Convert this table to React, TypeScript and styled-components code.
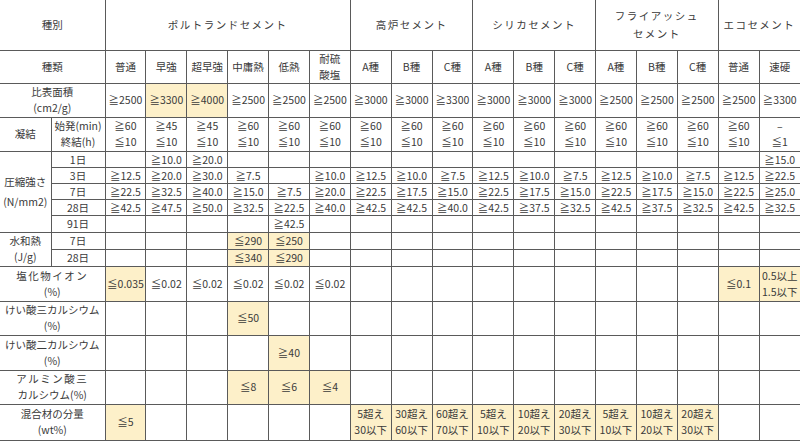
import React, { FC } from "react";
import styled, { createGlobalStyle } from "styled-components";

const GlobalStyle = createGlobalStyle`
  html, body {
    margin: 0;
    padding: 0;
    background: #fff;
  }
  body {
    font-family: "Noto Sans CJK JP", "Noto Sans", sans-serif;
    color: #3a3a3a;
  }
`;

const Table = styled.table`
  width: 800px;
  border-collapse: collapse;
  table-layout: fixed;
  font-size: 10.5px;
  line-height: 16px;
`;

const Row = styled.tr<{ $h: number; $tight?: boolean }>`
  height: ${(p) => p.$h}px;
  td {
    line-height: ${(p) => (p.$tight ? "13px" : "16px")};
  }
`;

interface CellProps {
  $hl?: boolean;
  $sub?: boolean;
}

const Cell = styled.td<CellProps>`
  border: 1px solid #5a5a5a;
  border-top-color: ${(p) => (p.$sub ? "#c4c4c4" : "#5a5a5a")};
  background: ${(p) => (p.$hl ? "#fdf0c9" : "#fff")};
  text-align: center;
  vertical-align: middle;
  padding: 0;
  white-space: nowrap;
  overflow: hidden;
  &:first-child {
    border-left: none;
  }
  &:last-child {
    border-right: none;
  }
`;

// group label spanning several thin rows
const GroupCell = styled(Cell)<{ $lh: number }>`
  && {
    line-height: ${(p) => p.$lh}px;
  }
`;

const HeadRow = styled.tr`
  height: 50px;
  td {
    border-top: none;
    line-height: 18px;
  }
`;

const Spaced = styled.span`
  letter-spacing: 1.5px;
`;

type V = string | [string, boolean];

const ml = (s: string) =>
  s.split("\n").map((l, i) => (
    <React.Fragment key={i}>
      {i > 0 && <br />}
      {l}
    </React.Fragment>
  ));

const Values: FC<{ vals: V[]; sub?: boolean }> = ({ vals, sub }) => (
  <>
    {vals.map((v, i) => {
      const [t, hl] = typeof v === "string" ? [v, false] : v;
      return (
        <Cell key={i} $hl={hl} $sub={sub}>
          {ml(t)}
        </Cell>
      );
    })}
  </>
);

const blank = (n: number): V[] => Array(n).fill("");
const h = (s: string): V => [s, true];

const setting: V[] = [
  "≧60\n≦10", "≧45\n≦10", "≧45\n≦10",
  ...Array(13).fill("≧60\n≦10"),
  "–\n≦1",
];

const strength: { label: string; vals: V[] }[] = [
  { label: "1日", vals: ["", "≧10.0", "≧20.0", ...blank(13), "≧15.0"] },
  {
    label: "3日",
    vals: ["≧12.5", "≧20.0", "≧30.0", "≧7.5", "", "≧10.0", "≧12.5", "≧10.0", "≧7.5", "≧12.5", "≧10.0", "≧7.5", "≧12.5", "≧10.0", "≧7.5", "≧12.5", "≧22.5"],
  },
  {
    label: "7日",
    vals: ["≧22.5", "≧32.5", "≧40.0", "≧15.0", "≧7.5", "≧20.0", "≧22.5", "≧17.5", "≧15.0", "≧22.5", "≧17.5", "≧15.0", "≧22.5", "≧17.5", "≧15.0", "≧22.5", "≧25.0"],
  },
  {
    label: "28日",
    vals: ["≧42.5", "≧47.5", "≧50.0", "≧32.5", "≧22.5", "≧40.0", "≧42.5", "≧42.5", "≧40.0", "≧42.5", "≧37.5", "≧32.5", "≧42.5", "≧37.5", "≧32.5", "≧42.5", "≧32.5"],
  },
  { label: "91日", vals: [...blank(4), "≧42.5", ...blank(12)] },
];

const Labels = ["普通", "早強", "超早強", "中庸熱", "低熱", "耐硫\n酸塩", "A種", "B種", "C種", "A種", "B種", "C種", "A種", "B種", "C種", "普通", "速硬"];

export default function App() {
  return (
    <>
      <GlobalStyle />
      <Table>
        <colgroup>
          <col style={{ width: 51 }} />
          <col style={{ width: 54 }} />
          {Array.from({ length: 17 }).map((_, i) => (
            <col key={i} />
          ))}
        </colgroup>
        <tbody>
          <HeadRow>
            <Cell colSpan={2}>種別</Cell>
            <Cell colSpan={6}><Spaced>ポルトランドセメント</Spaced></Cell>
            <Cell colSpan={3}><Spaced>高炉セメント</Spaced></Cell>
            <Cell colSpan={3}><Spaced>シリカセメント</Spaced></Cell>
            <Cell colSpan={3}><Spaced>フライアッシュ<br />セメント</Spaced></Cell>
            <Cell colSpan={2}><Spaced>エコセメント</Spaced></Cell>
          </HeadRow>
          <Row $h={33}>
            <Cell colSpan={2}>種類</Cell>
            <Values vals={Labels} />
          </Row>
          <Row $h={34}>
            <Cell colSpan={2}>比表面積<br />(cm2/g)</Cell>
            <Values
              vals={["≧2500", h("≧3300"), h("≧4000"), "≧2500", "≧2500", "≧2500", "≧3000", "≧3000", "≧3300", "≧3000", "≧3000", "≧3000", "≧2500", "≧2500", "≧2500", "≧2500", "≧3300"]}
            />
          </Row>
          <Row $h={34}>
            <Cell>凝結</Cell>
            <Cell>始発(min)<br />終結(h)</Cell>
            <Values vals={setting} />
          </Row>
          {strength.map((r, i) => (
            <Row $h={i === 4 ? 17 : 16} $tight key={r.label}>
              {i === 0 && (
                <GroupCell rowSpan={5} $lh={20}>
                  圧縮強さ<br />(N/mm2)
                </GroupCell>
              )}
              <Cell $sub={i > 0}>{r.label}</Cell>
              <Values vals={r.vals} sub={i > 0} />
            </Row>
          ))}
          <Row $h={17} $tight>
            <GroupCell rowSpan={2} $lh={16}>
              水和熱<br />(J/g)
            </GroupCell>
            <Cell>7日</Cell>
            <Values vals={[...blank(3), h("≦290"), h("≦250"), ...blank(12)]} />
          </Row>
          <Row $h={17} $tight>
            <Cell $sub>28日</Cell>
            <Values vals={[...blank(3), h("≦340"), h("≦290"), ...blank(12)]} sub />
          </Row>
          <Row $h={35}>
            <Cell colSpan={2}><Spaced>塩化物イオン</Spaced><br />(%)</Cell>
            <Values vals={[h("≦0.035"), "≦0.02", "≦0.02", "≦0.02", "≦0.02", "≦0.02", ...blank(9), h("≦0.1"), h("0.5以上\n1.5以下")]} />
          </Row>
          <Row $h={34}>
            <Cell colSpan={2}>けい酸三カルシウム<br />(%)</Cell>
            <Values vals={[...blank(3), h("≦50"), ...blank(13)]} />
          </Row>
          <Row $h={35}>
            <Cell colSpan={2}>けい酸二カルシウム<br />(%)</Cell>
            <Values vals={[...blank(4), h("≧40"), ...blank(12)]} />
          </Row>
          <Row $h={34}>
            <Cell colSpan={2}><Spaced>アルミン酸三</Spaced><br />カルシウム(%)</Cell>
            <Values vals={[...blank(3), h("≦8"), h("≦6"), h("≦4"), ...blank(11)]} />
          </Row>
          <Row $h={36}>
            <Cell colSpan={2}>混合材の分量<br />(wt%)</Cell>
            <Values
              vals={[h("≦5"), ...blank(5), h("5超え\n30以下"), h("30超え\n60以下"), h("60超え\n70以下"), h("5超え\n10以下"), h("10超え\n20以下"), h("20超え\n30以下"), h("5超え\n10以下"), h("10超え\n20以下"), h("20超え\n30以下"), "", ""]}
            />
          </Row>
        </tbody>
      </Table>
    </>
  );
}
